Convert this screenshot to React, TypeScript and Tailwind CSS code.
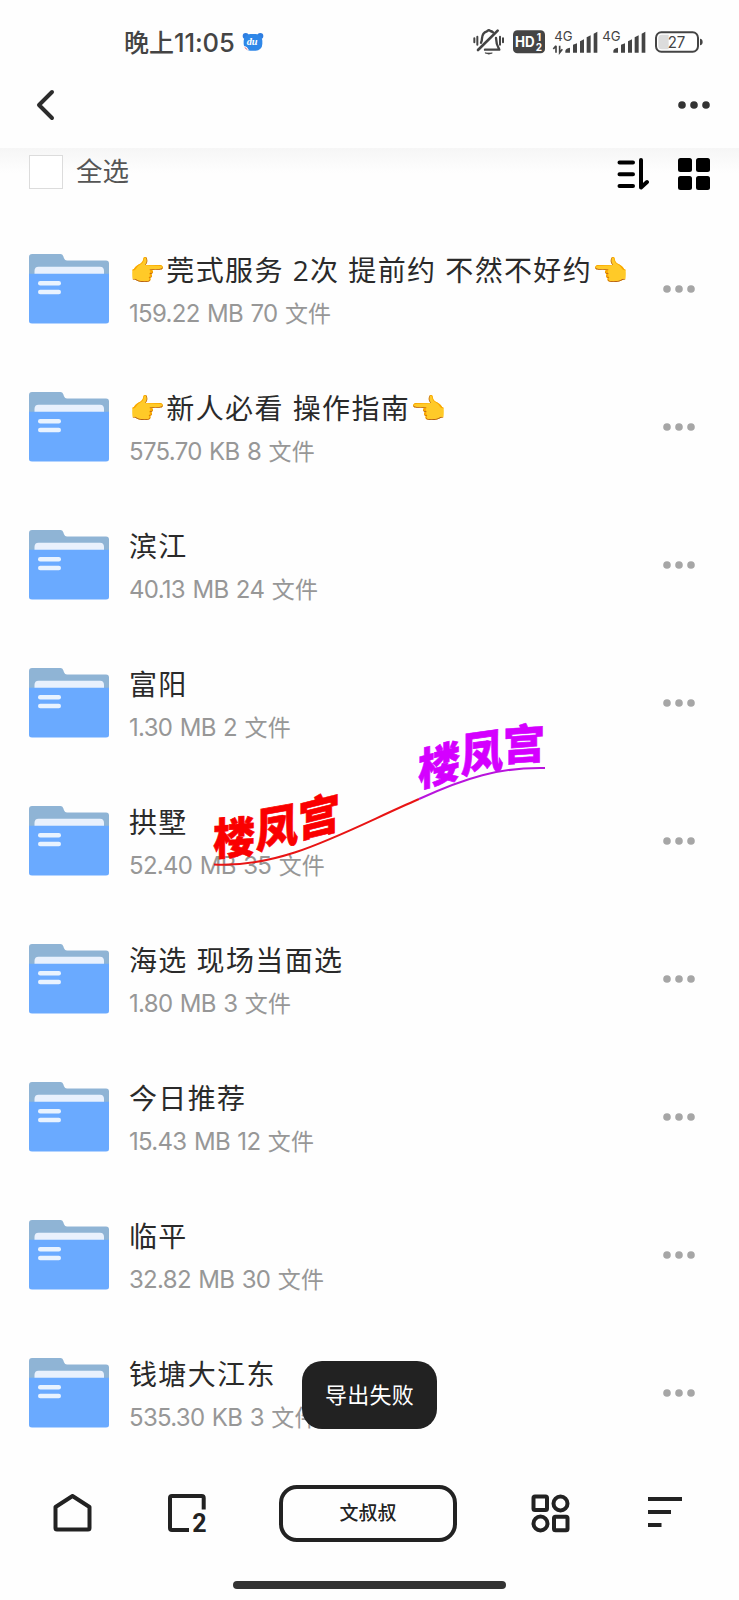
import React from "react";

interface Folder {
	name: string;
	size: string;
	count: number;
}

const folders: Folder[] = [
	{ name: "👉莞式服务 2次 提前约 不然不好约👈", size: "159.22 MB", count: 70 },
	{ name: "👉新人必看 操作指南👈", size: "575.70 KB", count: 8 },
	{ name: "滨江", size: "40.13 MB", count: 24 },
	{ name: "富阳", size: "1.30 MB", count: 2 },
	{ name: "拱墅", size: "52.40 MB", count: 35 },
	{ name: "海选 现场当面选", size: "1.80 MB", count: 3 },
	{ name: "今日推荐", size: "15.43 MB", count: 12 },
	{ name: "临平", size: "32.82 MB", count: 30 },
	{ name: "钱塘大江东", size: "535.30 KB", count: 3 },
];

const Dots = ({ className }: { className: string }) => (
	<svg width="32" height="8" viewBox="0 0 32 8" className={className}>
		<circle cx="4" cy="4" r="3.8" fill="currentColor" />
		<circle cx="16" cy="4" r="3.8" fill="currentColor" />
		<circle cx="28" cy="4" r="3.8" fill="currentColor" />
	</svg>
);

const FolderIcon = () => (
	<svg width="80" height="70" viewBox="0 0 80 70" className="shrink-0">
		<path
			d="M3 0H31.5Q33.5 0 34.2 2L35 4.2Q35.8 6.5 38 6.5H77Q80 6.5 80 9.5V30H0V3Q0 0 3 0Z"
			fill="#8fb4d5"
		/>
		<path d="M5.5 22V17Q5.5 12.7 9.5 12.7H71Q75 12.7 75 17V22Z" fill="#e9f1fd" />
		<path d="M0 19.8H80V67Q80 69.5 77 69.5H3Q0 69.5 0 67Z" fill="#6aaaff" />
		<rect x="9" y="27" width="23" height="4.4" rx="2.2" fill="#e9f3ff" />
		<rect x="9" y="35.8" width="23" height="4.4" rx="2.2" fill="#e9f3ff" />
	</svg>
);

// Emoji are set a little larger than the text around them
const Title = ({ name }: { name: string }) => (
	<p className="h-[44px] text-[28px] leading-[44px] tracking-[1.35px] [word-spacing:0.3px] text-[#2a2a2a]">
		{name.split(/(👉|👈)/).map((part, i) =>
			part === "👉" || part === "👈" ? (
				<span key={i} className="text-[29px] leading-none">{part}</span>
			) : (
				part
			)
		)}
	</p>
);

const StatusBar = () => (
	<div className="h-[84px] flex items-center text-[#444]">
		<span className="ml-[124px] text-[25px] leading-none whitespace-nowrap font-['Inter','Noto_Sans_CJK_SC',sans-serif] pt-px">
			<span className="font-medium">晚上</span>
			<span className="text-[25.5px] font-medium tracking-[-0.1px]">11:05</span>
		</span>
		<svg width="22" height="20" viewBox="0 0 66 60" className="absolute left-[242px] top-[32px]">
			<circle cx="11" cy="12" r="9" fill="#2f7de0" />
			<circle cx="55" cy="12" r="9" fill="#2f7de0" />
			<rect x="5" y="6" width="56" height="50" rx="20" fill="#2f87e8" />
			<text x="14" y="40" fontSize="31" fontWeight="700" fontStyle="italic" fill="#fff" fontFamily="Liberation Serif, serif">
				du
			</text>
			<path d="M6 44Q14 47 18 55" stroke="#fff" strokeWidth="6" fill="none" />
			<path d="M8 46L16 53" stroke="#e0445a" strokeWidth="2.5" />
		</svg>
		<div className="ml-auto mr-[36px] flex items-center">
			{/* Silent mode */}
			<svg width="31" height="28" viewBox="40 56 93 84" fill="none" stroke="currentColor" strokeWidth="6" strokeLinecap="round">
				<path d="M44 87V99M53 82V106M130 87V99M121 82V106" />
				<path d="M64 100Q67 94 67 87Q68 70 82 66Q87 60 92 65Q97 66 100 69" strokeWidth="7" />
				<path d="M109 86Q109 104 119 121H76" strokeWidth="7" strokeLinejoin="round" />
				<path d="M114 64L55 122" strokeWidth="8" />
				<path d="M77 131H98Q88 138 77 131Z" fill="currentColor" strokeWidth="2" />
			</svg>
			{/* HD voice */}
			<svg width="32" height="24" viewBox="159 62 96 72" className="ml-[9px]">
				<rect x="159" y="63" width="96" height="69" rx="13" fill="currentColor" />
				<g fill="#fff" fontFamily="Inter, sans-serif" fontWeight="700">
					<text x="165" y="112" fontSize="42" textLength="59" lengthAdjust="spacingAndGlyphs">HD</text>
					<text x="230" y="94" fontSize="30">1</text>
					<text x="227" y="124" fontSize="30">2</text>
				</g>
			</svg>
			<svg width="46" height="26" viewBox="276 58 138 78" className="ml-[7px]">
				<text x="283" y="94" fontSize="41" fill="currentColor" fontFamily="Inter, sans-serif" textLength="55" lengthAdjust="spacingAndGlyphs">4G</text>
				<path d="M288 108V129M288 108L280 118M299 108V129L307 119" stroke="currentColor" strokeWidth="5" fill="none" />
				<path d="M316 124Q316 116 330 114V129H316ZM339 105L351 101V129H339ZM360 95L372 89V129H360ZM380 83L392 77V129H380ZM401 72L412 66V129H401Z" fill="currentColor" />
			</svg>
			<svg width="44" height="26" viewBox="426 58 132 78" className="ml-[4px]">
				<text x="427" y="94" fontSize="41" fill="currentColor" fontFamily="Inter, sans-serif" textLength="55" lengthAdjust="spacingAndGlyphs">4G</text>
				<path d="M460 124Q460 116 474 114V129H460ZM483 105L495 101V129H483ZM504 95L516 89V129H504ZM524 83L536 77V129H524ZM545 72L556 66V129H545Z" fill="currentColor" />
			</svg>
			{/* Battery */}
			<svg width="48" height="22" viewBox="585 63 144 66" className="ml-[9px]">
				<rect x="588" y="67" width="126" height="58" rx="16" fill="#fff" stroke="currentColor" strokeWidth="6" />
				<path d="M626 74V118H605Q595 118 595 108V84Q595 74 605 74Z" fill="#dcdcdc" />
				<text x="623" y="113" fontSize="47" fill="currentColor" fontFamily="Inter, sans-serif" textLength="53" lengthAdjust="spacingAndGlyphs">27</text>
				<path d="M720 86Q728 87 728 96Q728 105 720 106Z" fill="currentColor" />
			</svg>
		</div>
	</div>
);

const Toolbar = () => (
	<div className="h-[72px] flex items-start pl-[29px] pr-[29px] bg-linear-to-b from-[#f6f6f6] to-[#fefefe] to-35%">
		<div className="mt-[7px] size-[34px] border border-[#dcdcdc] bg-white" />
		<span className="ml-[13px] mt-[10px] text-[26.5px] leading-[27px] text-[#555]">全选</span>
		<svg width="32" height="32" viewBox="0 0 32 32" className="ml-auto mt-[10px]" fill="none" stroke="#000" strokeWidth="4" strokeLinecap="round" strokeLinejoin="round">
			<path d="M2.5 4.5H16M2.5 16.2H16M2.5 28H16M24 2V29.5L30 24" />
		</svg>
		<svg width="32" height="32" viewBox="0 0 32 32" className="ml-[29px] mt-[10px]">
			<rect width="14" height="14" rx="2.5" />
			<rect x="18" width="14" height="14" rx="2.5" />
			<rect y="18" width="14" height="14" rx="2.5" />
			<rect x="18" y="18" width="14" height="14" rx="2.5" />
		</svg>
	</div>
);

// Hand-lettered mark floating over the list
const Mark = () => (
	<svg
		width="380"
		height="200"
		viewBox="190 690 380 200"
		className="absolute left-[190px] top-[690px] pointer-events-none"
		fontFamily="'Noto Sans CJK SC', sans-serif"
		fontWeight="900"
		fontSize="42"
	>
		<g fill="#fa0000" stroke="#fa0000" strokeWidth="0.6">
			<text transform="translate(213 855.5) skewY(-4) scale(1 1.04)">楼</text>
			<text transform="translate(256 848.5) skewY(-10) scale(1 1.1)">凤</text>
			<text transform="translate(298 838) skewY(-14) scale(1 1.06)">宫</text>
		</g>
		<g fill="#d400ff" stroke="#d400ff" strokeWidth="0.6">
			<text transform="translate(418 787) skewY(-14) scale(1 1.06)">楼</text>
			<text transform="translate(461 773) skewY(-8) scale(1 1.1)">凤</text>
			<text transform="translate(503 761) skewY(-4) scale(1 1)">宫</text>
		</g>
		<path d="M214 864.5C285 868 345 831 419 799" stroke="#e81414" strokeWidth="2" fill="none" />
		<path d="M419 799C465 778 500 767 545 768" stroke="#b814dc" strokeWidth="2" fill="none" />
	</svg>
);

const BottomNav = () => (
	<div className="h-[102px] flex items-center pl-[53px] text-[#222]">
		<svg width="39" height="38" viewBox="0 0 39 38" fill="none" stroke="currentColor" strokeWidth="4" strokeLinejoin="round">
			<path d="M19.5 2L36.5 13V34Q36.5 35.5 35 35.5H4Q2.5 35.5 2.5 34V13Z" />
		</svg>
		<svg width="48" height="53" viewBox="0 -7 48 53" className="ml-[76px]" fill="none" stroke="currentColor" strokeWidth="4">
			<path d="M35.7 15.5V4Q35.7 2 33.7 2H4Q2 2 2 4V34Q2 36 4 36H21" />
			<text x="24.2" y="38" fontSize="25" fontWeight="700" fill="currentColor" stroke="none" fontFamily="Roboto, sans-serif">2</text>
		</svg>
		<div className="ml-[63px] w-[178px] h-[57px] border-4 border-[#222] rounded-[18px] flex items-center justify-center text-[19px] font-medium">
			文叔叔
		</div>
		<svg width="39" height="39" viewBox="0 0 39 39" className="ml-[74px]" fill="none" stroke="currentColor" strokeWidth="4">
			<rect x="2.5" y="2.5" width="13.5" height="13.5" rx="1.5" />
			<circle cx="29.5" cy="9.5" r="7" />
			<circle cx="9.5" cy="29.5" r="7" />
			<rect x="23" y="22.8" width="13.5" height="13.5" rx="1.5" />
		</svg>
		<svg width="34" height="32" viewBox="0 0 34 32" className="ml-[78px]" fill="none" stroke="currentColor" strokeWidth="4">
			<path d="M0 2H34M0 15H23M0 28H13.5" />
		</svg>
	</div>
);

const App: React.FC = () => {
	return (
		<div className="relative w-[739px] h-[1600px] overflow-hidden flex flex-col bg-[#fefefe] font-['Open_Sans','Noto_Sans_CJK_SC',sans-serif]">
			<StatusBar />

			<div className="h-[64px] flex items-start justify-between pl-[36px] pr-[29px]">
				<svg width="19" height="32" viewBox="0 0 19 32" className="mt-[5px]" fill="none" stroke="#2c2c2c" strokeWidth="4" strokeLinecap="round" strokeLinejoin="round">
					<path d="M16 3L3 16L16 29" />
				</svg>
				<Dots className="mt-[17px] text-[#333]" />
			</div>

			<Toolbar />

			<div className="flex flex-col">
				{folders.map(folder => (
					<div key={folder.name} className="h-[138px] flex items-center pl-[29px] pr-[44px]">
						<FolderIcon />
						<div className="ml-[20px] pt-[6px] flex-1 whitespace-nowrap">
							<Title name={folder.name} />
							<p className="text-[24px] leading-[44px] text-[#979797] font-['Inter','Noto_Sans_CJK_SC',sans-serif] tracking-[-0.7px] [word-spacing:1.4px]">
								{folder.size} {folder.count} <span className="text-[23px] tracking-[0.2px]">文件</span>
							</p>
						</div>
						<Dots className="text-[#a6a6a6]" />
					</div>
				))}
			</div>

			<BottomNav />

			<div className="h-[36px] flex justify-center pt-[17px]">
				<div className="w-[273px] h-[8px] rounded-full bg-[#333]" />
			</div>

			<Mark />

			{/* Toast */}
			<div className="absolute left-[302px] top-[1361px] w-[135px] h-[68px] rounded-[20px] bg-[#222] text-white text-[22px] flex items-center justify-center tracking-[0.3px] pb-[2px]">
				导出失败
			</div>
		</div>
	);
};

export default App;
